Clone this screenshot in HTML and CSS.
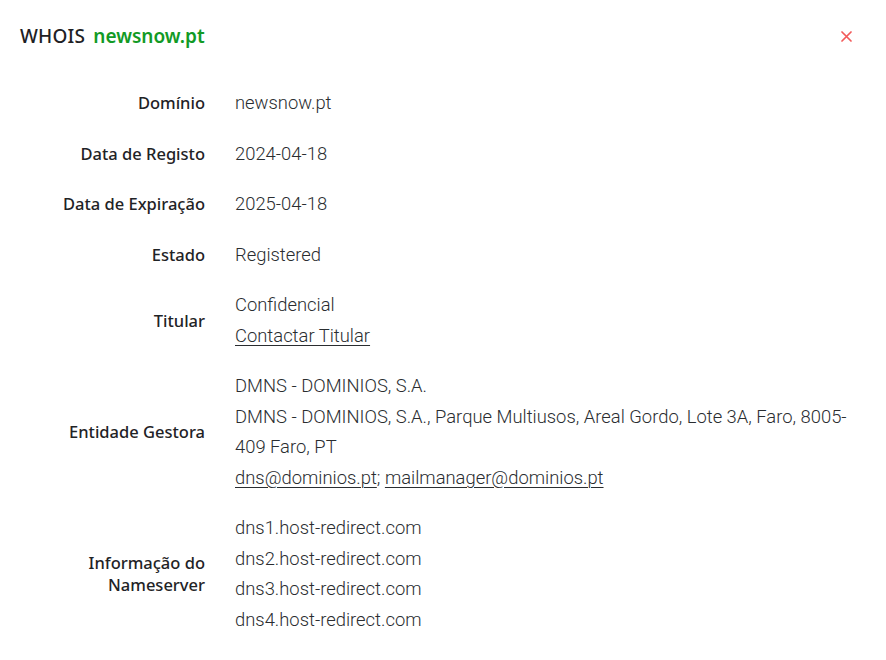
FILE: index.html
```html
<!DOCTYPE html>
<html lang="pt">
<head>
<meta charset="utf-8">
<title>WHOIS newsnow.pt</title>
<link rel="stylesheet" href="styles.css">
</head>
<body>
<div class="modal">
  <div class="header">
    <h2 class="title">WHOIS <span class="domain">newsnow.pt</span></h2>
    <button class="close" aria-label="Fechar">
      <svg width="11" height="11" viewBox="0 0 11 11"><path d="M1 1L10 10M10 1L1 10" stroke="#f25a5a" stroke-width="1.7" stroke-linecap="round"/></svg>
    </button>
  </div>
  <div class="table">
    <div class="row">
      <div class="label">Domínio</div>
      <div class="value"><div>newsnow.pt</div></div>
    </div>
    <div class="row">
      <div class="label">Data de Registo</div>
      <div class="value"><div>2024-04-18</div></div>
    </div>
    <div class="row">
      <div class="label">Data de Expiração</div>
      <div class="value"><div>2025-04-18</div></div>
    </div>
    <div class="row">
      <div class="label">Estado</div>
      <div class="value"><div>Registered</div></div>
    </div>
    <div class="row">
      <div class="label">Titular</div>
      <div class="value"><div>Confidencial</div><div><a href="#">Contactar Titular</a></div></div>
    </div>
    <div class="row">
      <div class="label">Entidade Gestora</div>
      <div class="value">
        <div>DMNS - DOMINIOS, S.A.</div>
        <div>DMNS - DOMINIOS, S.A., Parque Multiusos, Areal Gordo, Lote 3A, Faro, 8005-409 Faro, PT</div>
        <div><a href="#">dns@dominios.pt</a>; <a href="#">mailmanager@dominios.pt</a></div>
      </div>
    </div>
    <div class="row">
      <div class="label">Informação do<br>Nameserver</div>
      <div class="value">
        <div>dns1.host-redirect.com</div>
        <div>dns2.host-redirect.com</div>
        <div>dns3.host-redirect.com</div>
        <div>dns4.host-redirect.com</div>
      </div>
    </div>
  </div>
</div>
</body>
</html>
```
FILE: styles.css
```css
* { box-sizing: border-box; }
html, body { margin: 0; padding: 0; background: #fff; }
body { font-family: "Noto Sans", "Open Sans", sans-serif; color: #222; }
.modal { width: 886px; padding: 0 25px 0 20px; }
.header { display: flex; align-items: center; justify-content: space-between; height: 72px; }
.title { margin: 0; font-family: "Noto Sans", sans-serif; font-size: 19px; font-weight: 500; color: #1e2124; letter-spacing: 0.2px; }
.domain { color: #129a25; font-weight: 600; margin-left: 3px; letter-spacing: 0; }
.close { background: none; border: 0; padding: 0; width: 14px; height: 14px; display: flex; align-items: center; justify-content: center; margin-right: 8px; cursor: pointer; }
.table { display: flex; flex-direction: column; padding-top: 6px; }
.row { display: grid; grid-template-columns: 185px 1fr; column-gap: 30px; align-items: center; padding: 10px 0; }
.label { text-align: right; font-family: "Noto Sans", sans-serif; font-weight: 500; font-size: 16.5px; line-height: 22px; color: #1f2326; }
.value { font-family: Roboto, sans-serif; font-weight: 300; font-size: 18.4px; line-height: 30.5px; color: #2a2d30; }
.value a { color: inherit; text-decoration: underline; text-underline-offset: 3px; text-decoration-thickness: 1px; }
```
